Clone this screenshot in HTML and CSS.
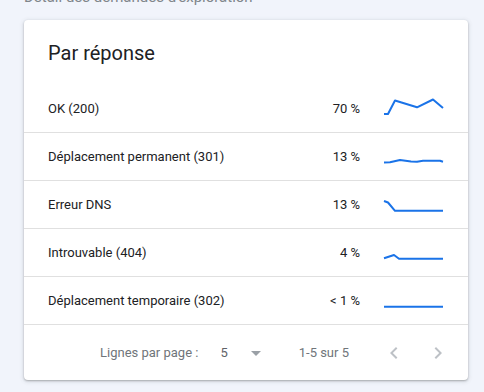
FILE: index.html
```html
<!DOCTYPE html>
<html lang="fr">
<head>
<meta charset="utf-8">
<title>Par réponse</title>
<link rel="stylesheet" href="styles.css">
</head>
<body>
<div class="page">
  <div class="section-title">Détail des demandes d'exploration</div>
  <div class="card">
    <h2 class="card-title">Par réponse</h2>
    <div class="rows">
      <div class="row">
        <span class="label">OK (200)</span>
        <span class="pct">70 %</span>
        <svg class="spark" viewBox="0 0 60 20" width="60" height="20"><path d="M0,15 L4,15 L11,1.5 L33,8.3 L49,0.5 L59,9"/></svg>
      </div>
      <div class="row">
        <span class="label">Déplacement permanent (301)</span>
        <span class="pct">13 %</span>
        <svg class="spark" viewBox="0 0 60 20" width="60" height="20"><path d="M0,15.6 L6,15.3 L16,13 L27,14.6 L33,14.7 L39,13.8 L56,13.8 L59,14.8"/></svg>
      </div>
      <div class="row">
        <span class="label">Erreur DNS</span>
        <span class="pct">13 %</span>
        <svg class="spark" viewBox="0 0 60 20" width="60" height="20"><path d="M0,6 L4,7.5 L11,15.8 L59,15.8"/></svg>
      </div>
      <div class="row">
        <span class="label">Introuvable (404)</span>
        <span class="pct">4 %</span>
        <svg class="spark" viewBox="0 0 60 20" width="60" height="20"><path d="M0,15.3 L10,12 L15,15.8 L59,15.8"/></svg>
      </div>
      <div class="row">
        <span class="label">Déplacement temporaire (302)</span>
        <span class="pct">&lt; 1 %</span>
        <svg class="spark" viewBox="0 0 60 20" width="60" height="20"><path d="M0,15.7 L59,15.7"/></svg>
      </div>
    </div>
    <div class="footer">
      <span class="footer-label">Lignes par page :</span>
      <span class="select">
        <span class="select-value">5</span>
        <svg class="icon arrow" viewBox="0 0 24 24" width="24" height="24"><path d="M7 10l5 5 5-5z"/></svg>
      </span>
      <span class="range">1-5 sur 5</span>
      <span class="nav">
        <svg class="icon chev" viewBox="0 0 24 24" width="24" height="24"><path d="M15.41 7.41L14 6l-6 6 6 6 1.41-1.41L10.83 12z"/></svg>
        <svg class="icon chev" viewBox="0 0 24 24" width="24" height="24"><path d="M10 6L8.59 7.41 13.17 12l-4.58 4.59L10 18l6-6z"/></svg>
      </span>
    </div>
  </div>
</div>
</body>
</html>
```
FILE: styles.css
```css
html, body {
  margin: 0;
  padding: 0;
  background: #f1f4fb;
  font-family: Roboto, "Liberation Sans", Arial, sans-serif;
}

.page {
  padding: 0 16px 0 24px;
  overflow: hidden;
  height: 392px;
  box-sizing: border-box;
}

.section-title {
  font-size: 15px;
  line-height: 20px;
  color: #80868b;
  margin-top: -13px;
  margin-bottom: 13px;
  white-space: nowrap;
}

.card {
  width: 444px;
  height: 360px;
  background: #fff;
  border-radius: 4px;
  box-shadow: 0 1px 2px rgba(60, 64, 67, 0.35), 0 1px 4px 1px rgba(60, 64, 67, 0.12);
  display: flex;
  flex-direction: column;
  box-sizing: border-box;
}

.card-title {
  margin: 0;
  height: 65px;
  padding: 23px 24px 0;
  box-sizing: border-box;
  font-size: 20px;
  line-height: 20px;
  font-weight: 400;
  color: #202124;
}

.rows {
  display: flex;
  flex-direction: column;
}

.row {
  height: 48px;
  box-sizing: border-box;
  border-bottom: 1px solid #e0e0e0;
  display: flex;
  align-items: center;
  padding: 0 24px;
  font-size: 13px;
  color: #202124;
}

.label {
  flex: 1;
  white-space: nowrap;
}

.pct {
  text-align: right;
  white-space: nowrap;
}

.spark {
  margin-left: 24px;
  flex: none;
  overflow: visible;
}

.spark path {
  fill: none;
  stroke: #1a73e8;
  stroke-width: 2;
  stroke-linejoin: round;
}

.footer {
  flex: 1;
  display: flex;
  align-items: center;
  padding-left: 76px;
  font-size: 13px;
  color: #70757a;
}

.footer-label {
  white-space: nowrap;
}

.select {
  display: flex;
  align-items: center;
  margin-left: 22px;
}

.select-value {
  color: #5f6368;
}

.arrow {
  margin-left: 16px;
}

.arrow path {
  fill: #9aa0a6;
}

.range {
  margin-left: 31px;
  white-space: nowrap;
}

.nav {
  display: flex;
  gap: 20px;
  margin-left: 33px;
}

.icon {
  display: block;
  flex: none;
}

.chev path {
  fill: #bdc1c6;
}
```
